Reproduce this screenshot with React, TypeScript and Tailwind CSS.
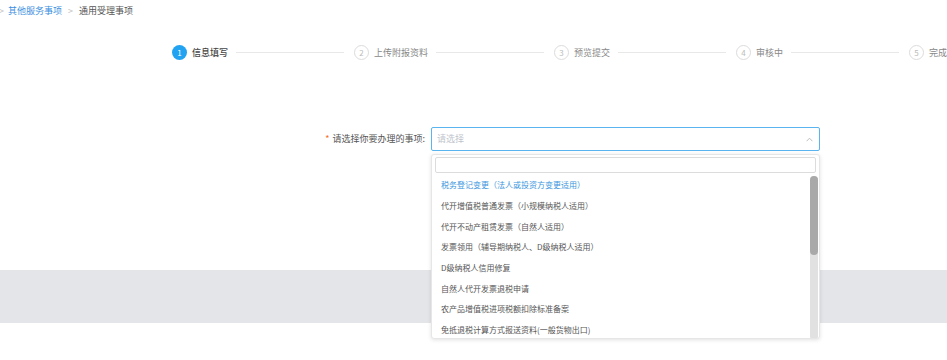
import React from "react";

const font = { fontFamily: '"Noto Sans CJK SC", "Noto Sans", sans-serif' };

const steps = ["信息填写", "上传附报资料", "预览提交", "审核中", "完成"];

const items = [
  "税务登记变更（法人或投资方变更适用）",
  "代开增值税普通发票（小规模纳税人适用）",
  "代开不动产租赁发票（自然人适用）",
  "发票领用（辅导期纳税人、D级纳税人适用）",
  "D级纳税人信用修复",
  "自然人代开发票退税申请",
  "农产品增值税进项税额扣除标准备案",
  "免抵退税计算方式报送资料(一般货物出口)",
];

export default function App() {
  return (
    <div className="relative h-[360px] w-[947px] overflow-hidden bg-white" style={font}>
      {/* breadcrumb */}
      <div className="flex h-[20px] items-center text-[9px] leading-none">
        <span className="ml-[-1px] mr-[4px] text-[#c0c0c0]">&gt;</span>
        <span className="text-[#3d8fe0]">其他服务事项</span>
        <span className="mx-[6px] text-[#c0c0c0]">&gt;</span>
        <span className="text-[#555]">通用受理事项</span>
      </div>

      {/* steps */}
      <div className="mt-[25px] flex h-[15px] items-center pl-[172px] text-[9px] leading-none whitespace-nowrap">
        {steps.map((s, i) => (
          <div key={s} className="flex items-center">
            {i === 0 ? (
              <div className="flex h-[15px] w-[15px] items-center justify-center rounded-full bg-[#21a3f1] text-[8px] text-white">
                1
              </div>
            ) : (
              <div className="flex h-[15px] w-[15px] items-center justify-center rounded-full border border-[#dcdcdc] text-[8px] text-[#bbb]">
                {i + 1}
              </div>
            )}
            <span
              className={
                i === 0
                  ? "ml-[5px] font-medium text-[#444]"
                  : "ml-[5px] text-[#888]"
              }
            >
              {s}
            </span>
            {i < steps.length - 1 && (
              <div className="ml-[8px] mr-[10px] h-px w-[108px] bg-[#e8e8e8]" />
            )}
          </div>
        ))}
      </div>

      {/* form row */}
      <div className="mt-[67px] flex h-[24px] items-center">
        <div className="w-[431px] pr-[6px] text-right text-[9px] text-[#555]">
          <span className="mr-[3px] text-[#f56c2c]">*</span>请选择你要办理的事项:
        </div>
        <div className="flex h-[24px] w-[389px] items-center justify-between rounded-[2px] border border-[#5ab4ef] pl-[5px] pr-[6px]">
          <span className="text-[9px] text-[#c0c4cc]">请选择</span>
          <svg width="7" height="5" viewBox="0 0 7 5" className="mt-[1px]">
            <path d="M0.6 4.2 L3.5 1.2 L6.4 4.2" fill="none" stroke="#b8b8b8" strokeWidth="0.9" />
          </svg>
        </div>
      </div>

      {/* grey band */}
      <div className="mt-[119px] h-[53px] w-full bg-[#e4e5e9]" />

      {/* dropdown */}
      <div className="absolute left-[431px] top-[154px] h-[185px] w-[389px] overflow-hidden rounded-[3px] border border-[#e6e6e6] bg-white shadow-[0_1px_4px_rgba(0,0,0,0.12)]">
        <div className="mx-[3px] mt-[2px] h-[16px] rounded-[2px] border border-[#dcdcdc] bg-white" />
        <div className="relative mt-[2px] flex">
          <div className="flex-1">
            {items.map((t, i) => (
              <div
                key={t}
                className={
                  "flex h-[20.7px] items-center pl-[9px] text-[8px] leading-none whitespace-nowrap " +
                  (i === 0 ? "text-[#3a96de]" : "text-[#555]")
                }
              >
                {t}
              </div>
            ))}
          </div>
          <div className="mr-[1px] mt-[1px] h-[164px] w-[8px] rounded-[4px] bg-[#e1e1e1]">
            <div className="h-[79px] w-[8px] rounded-[4px] bg-[#a9a9a9]" />
          </div>
        </div>
      </div>
    </div>
  );
}
